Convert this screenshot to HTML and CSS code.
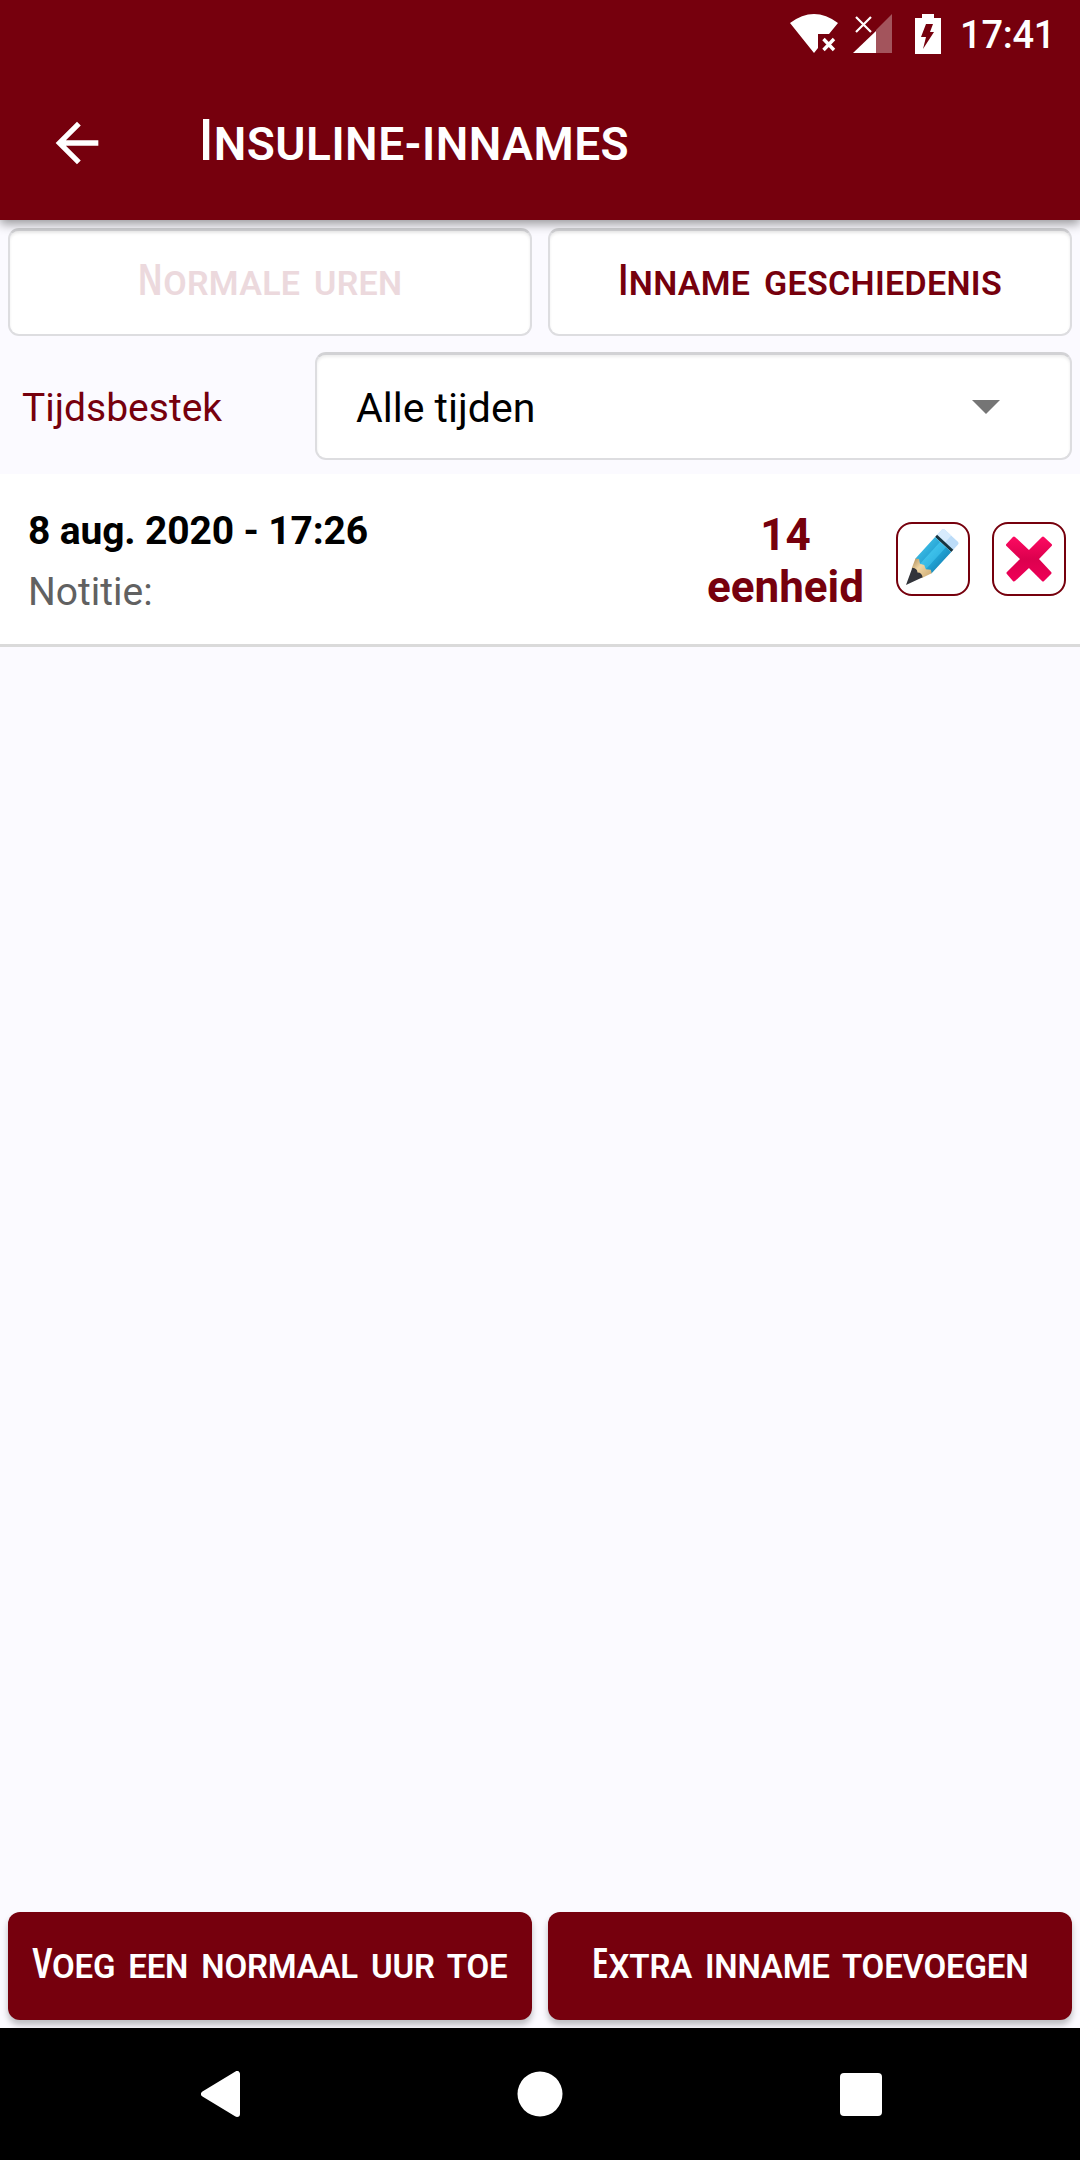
FILE: index.html
```html
<!DOCTYPE html>
<html lang="nl">
<head>
	<meta charset="UTF-8">
	<meta name="viewport" content="width=device-width, initial-scale=1.0">
	<link rel="stylesheet" href="styles.css">
	<title>Insuline-innames</title>
</head>
<body>
	<div id="app">
		<header class="header">
			<div class="status-bar">
				<svg class="wifi" width="48" height="40" viewBox="0 0 48 40">
					<path fill="#fff" d="M0 9Q24-9 48 9L39 20H28V34L24 39Z"/>
					<path stroke="#fff" stroke-width="3.4" d="M33.5 25l10.5 11M44 25L33.500 36"/>
				</svg>
				<svg class="signal" width="39" height="40" viewBox="0 0 39 40">
					<path fill="#fff" fill-opacity=".33" d="M39 0V39H23V16Z"/>
					<path fill="#fff" d="M23 17V39H0Z"/>
					<path stroke="#fff" stroke-width="2.200" d="M3 3l15 15M18 3L3 18"/>
				</svg>
				<svg class="battery" width="26" height="40" viewBox="0 0 26 40">
					<path fill="#fff" d="M7 0H19V4H26V40H0V4H7Z"/>
					<path fill="#76000d" d="M11 10H18L15 18H19L8 35L11 23H6Z"/>
				</svg>
				<span class="time">17:41</span>
			</div>
			<div class="title-bar">
				<svg class="back" width="64" height="64" viewBox="0 0 24 24">
					<path fill="#fff" d="M20 11H7.830l5.590-5.590L12 4l-8 8 8 8 1.410-1.410L7.830 13H20v-2z"/>
				</svg>
				<h1 class="caps">Insuline-innames</h1>
			</div>
		</header>

		<div class="tabs">
			<button class="tab caps disabled" disabled>Normale uren</button>
			<button class="tab caps history">Inname geschiedenis</button>
		</div>
		<div class="filter">
			<label>Tijdsbestek</label>
			<div class="select">
				<span>Alle tijden</span>
				<svg width="28" height="14" viewBox="0 0 28 14"><path fill="#757575" d="M0 0H28L14 14Z"/></svg>
			</div>
		</div>

		<div class="list">
			<div class="item">
				<div class="information">
					<h5>8 aug. 2020 - 17:26</h5>
					<p>Notitie:</p>
				</div>
				<div class="amount">14<br>eenheid</div>
				<button class="icon-btn">
					<svg width="70" height="70" viewBox="0 0 70 70">
						<defs>
							<linearGradient id="blue" x1="0" x2="1">
								<stop offset="0" stop-color="#36b5e0"/>
								<stop offset=".3" stop-color="#2ba9d8"/>
								<stop offset=".34" stop-color="#3dc0ea"/>
								<stop offset=".66" stop-color="#35b8e5"/>
								<stop offset=".7" stop-color="#1fa0d2"/>
								<stop offset="1" stop-color="#1b90c2"/>
							</linearGradient>
							<linearGradient id="wood" x1="0" x2="1">
								<stop offset="0" stop-color="#b99a68"/>
								<stop offset=".4" stop-color="#f0d6a4"/>
								<stop offset="1" stop-color="#d2b079"/>
							</linearGradient>
						</defs>
						<!-- pencil drawn upright with the point at 0,0 -->
						<g transform="translate(8 61) rotate(42.500)">
							<path fill="#bcdcf8" d="M-11-65q0-2 2-2H9q2 0 2 2V-57H-11Z"/>
							<path fill="#d7ebfd" d="M-11-65q0-2 2-2h9v10H-11Z"/>
							<path fill="#17343f" d="M-11-58H11V-55H-11Z"/>
							<path fill="url(#blue)" d="M-11-55H11V-26L5-23 0-26-5-23-11-26Z"/>
							<path fill="url(#wood)" d="M-11-26L-8-28-4-25 0-27 4-25 8-28 11-26 7-16Q0-13-7-16Z"/>
							<path fill="#32343a" d="M-7-17Q-3-20 0-17 3-20 7-17L0 0Z"/>
						</g>
					</svg>
				</button>
				<button class="icon-btn">
					<svg width="70" height="70" viewBox="0 0 70 70">
						<defs>
							<linearGradient id="red" x1="0" y1="0" x2="0" y2="1">
								<stop offset="0" stop-color="#fb0a60"/>
								<stop offset=".5" stop-color="#dc004e"/>
								<stop offset="1" stop-color="#ee0057"/>
							</linearGradient>
						</defs>
						<path fill="url(#red)" stroke="url(#red)" stroke-width="3" stroke-linejoin="round" d="M20 14L35 28 49 14 56.500 21 43 35 56 49 49 56 35 42 20 56 14 49 28 35 13.500 21Z"/>
					</svg>
				</button>
			</div>
		</div>

		<div class="actions">
			<button class="action caps add-hour">Voeg een normaal uur toe</button>
			<button class="action caps add-extra">Extra inname toevoegen</button>
		</div>
		<div class="nav-bar">
			<svg width="39" height="46" viewBox="0 0 39 46"><path fill="#fff" stroke="#fff" stroke-width="6" stroke-linejoin="round" d="M36 3V43L3 23Z"/></svg>
			<svg width="46" height="46" viewBox="0 0 46 46"><circle fill="#fff" cx="23" cy="23" r="22.500"/></svg>
			<svg width="42" height="43" viewBox="0 0 42 43"><rect fill="#fff" width="42" height="43" rx="4"/></svg>
		</div>
	</div>
</body>
</html>
```
FILE: styles.css
```css
body {
	margin: 0;
	padding: 0;
	font-family: Roboto, Arial, sans-serif;
	background: #fbfaff;
}

h1, h5, p {
	margin: 0;
	padding: 0;
}

button {
	margin: 0;
	padding: 0;
	border: 0;
}

svg {
	display: block;
	flex: none;
}

#app {
	width: 1080px;
	height: 2160px;
	display: flex;
	flex-direction: column;
	overflow: hidden;
}

/* small caps with a slightly higher first letter */
.caps {
	font-family: Roboto, Arial, sans-serif;
	font-weight: 600;
	text-transform: uppercase;
	white-space: nowrap;
}
.caps::first-letter {
	font-family: 'Open Sans', 'Noto Sans', sans-serif;
	font-size: 1.26em;
	font-weight: 600;
	font-stretch: 75%;
}

.header {
	height: 220px;
	background: #76000d;
	color: #fff;
	box-shadow: 0 4px 10px rgba(0, 0, 0, .4);
	position: relative;
}

.status-bar {
	height: 68px;
	display: flex;
	align-items: center;
	justify-content: flex-end;
	padding-right: 25px;
	box-sizing: border-box;
}
.status-bar .wifi {
	margin-right: 15px;
}
.status-bar .signal {
	margin-right: 23px;
}
.status-bar .battery {
	margin-right: 19px;
}
.status-bar .time {
	padding-top: 2px;
	font-size: 38px;
	font-weight: 500;
	line-height: 66px;
	letter-spacing: -.3px;
}

.title-bar {
	height: 150px;
	display: flex;
	align-items: center;
	padding-left: 45px;
}
.title-bar h1 {
	margin-left: 90px;
	padding-bottom: 4px;
	font-size: 46px;
	line-height: 64px;
	letter-spacing: .5px;
}

.tabs {
	display: flex;
	gap: 16px;
	padding: 8px;
}
.tab {
	flex: 1;
	height: 108px;
	box-sizing: border-box;
	padding-bottom: 9px;
	background: #fff;
	border: 2px solid #dddde0;
	border-top: 3px solid #d2d2d5;
	border-radius: 11px;
	box-shadow: inset 0 2px 3px rgba(0, 0, 0, .07);
	color: #76000d;
	font-size: 34px;
	letter-spacing: .3px;
	word-spacing: 5px;
}
.tab.disabled {
	color: #ecd9dd;
}

.filter {
	display: flex;
	align-items: center;
	padding: 8px 8px 14px 22px;
}
.filter label {
	width: 293px;
	padding-top: 3px;
	color: #76000d;
	font-size: 39px;
}
.select {
	flex: 1;
	height: 108px;
	box-sizing: border-box;
	display: flex;
	align-items: center;
	justify-content: space-between;
	padding: 0 70px 0 39px;
	background: #fff;
	border: 2px solid #dddde0;
	border-top: 3px solid #d2d2d5;
	border-radius: 11px;
	box-shadow: inset 0 2px 3px rgba(0, 0, 0, .07);
	color: #000;
	font-size: 41px;
}
.select span {
	padding-top: 2px;
}

.list {
	flex: 1;
}
.item {
	height: 173px;
	box-sizing: border-box;
	display: flex;
	align-items: center;
	padding: 0 14px 0 28px;
	background: #fff;
	border-bottom: 3px solid #dadada;
}
.information {
	flex: 1;
	padding-top: 5px;
}
.information h5 {
	font-size: 39px;
	line-height: 60px;
	letter-spacing: -.15px;
}
.information p {
	color: #616161;
	font-size: 39px;
	line-height: 62px;
}
.amount {
	margin-right: 32px;
	padding-top: 4px;
	color: #76000d;
	font-size: 44px;
	font-weight: 700;
	line-height: 52px;
	text-align: center;
}
.icon-btn {
	width: 74px;
	height: 74px;
	background: #fff;
	border: 2px solid #76000d;
	border-radius: 16px;
}
.icon-btn + .icon-btn {
	margin-left: 22px;
}

.actions {
	display: flex;
	gap: 16px;
	padding: 8px;
	overflow: hidden;
}
.action {
	flex: 1;
	height: 108px;
	padding-bottom: 9px;
	background: #76000d;
	border-radius: 12px;
	box-shadow: 0 5px 6px rgba(0, 0, 0, .25);
	color: #fff;
	font-size: 33px;
	letter-spacing: -.2px;
	word-spacing: 5px;
}

.nav-bar {
	height: 132px;
	background: #000;
	display: flex;
	align-items: center;
	justify-content: space-between;
	padding: 0 198px 0 201px;
}
```
